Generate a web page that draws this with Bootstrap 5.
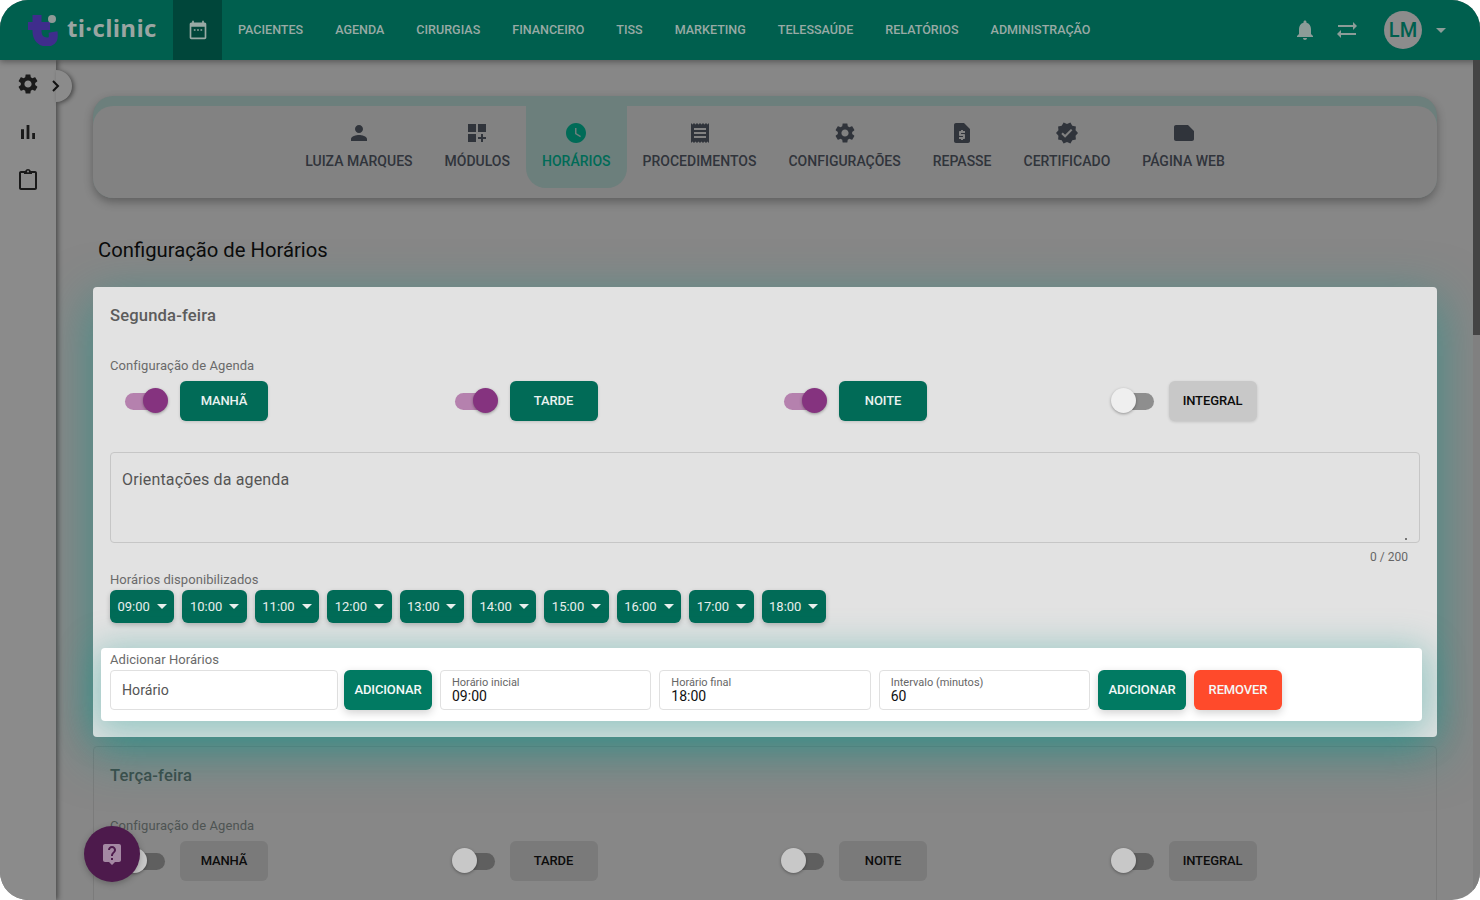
<!DOCTYPE html>
<html lang="pt-BR">
<head>
    <meta charset="UTF-8">
    <title>Configuração de Horários</title>
    <link href="https://cdn.jsdelivr.net/npm/bootstrap@5.3.2/dist/css/bootstrap.min.css" rel="stylesheet">
    <style>
        html, body { height: 100%; overflow: hidden; background: #fff; }
        body { font-family: Roboto, "Liberation Sans", sans-serif; }
        .app-frame { position: relative; width: 1480px; height: 900px; border-radius: 28px; overflow: hidden; background: #878787; }
        .top-bar { position: relative; z-index: 5; height: 60px; flex: none; background: #005f4e; box-shadow: 0 2px 6px rgba(0,0,0,.35); }
        .logo-box { width: 173px; padding-left: 27px; gap: 7px; }
        .logo-text { font-family: "Open Sans", sans-serif; font-weight: 700; font-size: 24px; letter-spacing: .3px; color: #9aa5a2; line-height: 1; margin-top: -4px; }
        .cal-box { width: 49px; height: 60px; background: #00463a; }
        .top-link { font-size: 12.55px; font-weight: 500; color: #98aaa5; margin-left: 32px; text-transform: uppercase; }
        .top-links { padding-left: 16px; }
        .top-links .top-link:first-child { margin-left: 0; }
        .bar-swap { margin-left: 18px; }
        .user-dot { width: 38px; height: 38px; margin-left: 25px; border-radius: 50%; background: #8c8c8c; color: #005f4e; font-size: 20px; font-weight: 500; }
        .user-caret { width: 0; height: 0; margin: 0 34px 0 14px; border-left: 5px solid transparent; border-right: 5px solid transparent; border-top: 5px solid #8c9c98; }
        .side-bar { position: relative; z-index: 3; width: 56px; flex: none; background: #8b8b8b; box-shadow: 2px 0 5px rgba(0,0,0,.45); padding-top: 12px; gap: 24px; }
        .side-open { position: absolute; left: 56px; top: 10px; width: 16px; height: 32px; border-radius: 0 16px 16px 0; background: #8b8b8b; box-shadow: 2px 1px 4px rgba(0,0,0,.45); }
        .side-open svg { margin-left: -8px; }
        .main-scroll { width: 1417px; flex: none; padding: 36px 36px 0 37px; overflow: hidden; }
        .scroll-bar { position: relative; z-index: 6; width: 7px; flex: none; background: #808080; }
        .scroll-thumb { height: 275px; background: #444; }
        .tabs-box { height: 102px; padding-top: 10px; border-radius: 20px; background: #6c7f7c; box-shadow: 0 4px 10px rgba(0,0,0,.3); }
        .tabs-inner { height: 92px; border-radius: 20px; background: #828282; }
        .tab-item { padding: 15px 16px 0; height: 82px; font-size: 14px; font-weight: 500; color: #30343b; border-radius: 0 0 20px 20px; }
        .tab-item svg { display: block; margin: 0 auto 6px; }
        .tab-item.tab-on { background: #6c7f7c; color: #006b57; }
        .page-title { font-size: 20.25px; font-weight: 400; color: #0b0b0b; margin: 40px 0 25px 5px; line-height: 24px; }
        .day-card { position: relative; border-radius: 4px; padding: 17px 17px 0; }
        .day-on { z-index: 2; height: 450px; background: #e2e2e2; box-shadow: 0 14px 50px 2px rgba(0,150,137,.5); }
        .day-off { height: 300px; margin-top: 9px; border: 1px solid #7b7b7b; padding: 17px 16px 0; }
        .day-name { font-size: 16.6px; font-weight: 500; letter-spacing: .15px; color: #5c5c5c; line-height: 24px; margin-bottom: 30px; }
        .day-off .day-name { color: #3f4a48; }
        .field-title { font-size: 13px; letter-spacing: .07px; color: #6a6a6a; line-height: 16px; }
        .day-off .field-title { color: #4e5453; }
        .period-row { width: 1318px; margin: 7px -4px 0; }
        .period-col { width: 329.5px; padding: 0 4px; height: 40px; }
        .switch-box { position: relative; width: 70px; height: 40px; flex: none; }
        .switch-track { position: absolute; top: 12px; left: 15px; width: 42px; height: 17px; border-radius: 9px; background: #b581ae; }
        .switch-dot { position: absolute; top: 7px; left: 33px; width: 25px; height: 25px; border-radius: 50%; background: #85337f; box-shadow: 0 1px 3px rgba(0,0,0,.35); }
        .switch-box.is-off .switch-track { left: 14px; width: 41px; background: #8e8e8e; }
        .switch-box.is-off .switch-dot { left: 12px; background: #efefef; }
        .day-off .switch-box.is-off .switch-track { background: #5f5f5f; }
        .day-off .switch-box.is-off .switch-dot { background: #c8c8c8; }
        .period-btn { width: 88px; height: 40px; padding: 0; border: 0; border-radius: 6px; background: #016b57; color: #eaf2f0; font-size: 13px; letter-spacing: -.12px; font-weight: 500; box-shadow: 0 1px 3px rgba(0,0,0,.15); }
        .period-btn.is-off { background: #c8c8c8; color: #0c0c0c; }
        .day-off .period-btn.is-off { background: #7a7a7a; box-shadow: none; }
        .notes-wrap { position: relative; width: 1310px; margin-top: 31px; }
        .notes-box { width: 100%; height: 91px; display: block; resize: none; border: 1px solid #c6c6c6; border-radius: 4px; background: #e2e2e2; padding: 15px 11px; font-size: 16px; letter-spacing: .15px; }
        .notes-box::placeholder { color: #555; opacity: 1; }
        .notes-grip { position: absolute; right: 13px; bottom: 3px; width: 2px; height: 2px; background: #777; }
        .notes-count { font-size: 12px; color: #666; line-height: 14px; text-align: right; padding: 7px 12px 0 0; }
        .slot-title { margin-top: 8px; }
        .slot-row { gap: 8px; margin-top: 2px; }
        .slot-btn { width: 64.4px; height: 33px; padding: 0; border: 0; border-radius: 6px; background: #016b57; color: #e8efed; font-size: 13px; box-shadow: 0 2px 5px rgba(0,0,0,.22); }
        .slot-btn:hover { background: #016b57; color: #e8efed; }
        .slot-btn.dropdown-toggle::after { margin-left: 7px; vertical-align: 2px; border-top-width: 5px; border-left-width: 5px; border-right-width: 5px; }
        .add-panel { position: relative; width: 1321px; height: 73px; margin: 25px 0 0 -9px; padding: 4px 9px 0; border-radius: 4px; background: #fff; box-shadow: 0 6px 36px 6px rgba(0,150,137,.35); }
        .add-row { gap: 8px; margin-top: 2px; }
        .slot-input { width: 228px; height: 40px; margin-right: -2px; border: 1px solid #e0e0e0; border-radius: 4px; font-size: 14.2px; padding: 0 11px; box-shadow: none; }
        .slot-input::placeholder { color: #555; }
        .time-field { width: 211.33px; height: 40px; padding: 5px 11px; border: 1px solid #e0e0e0; border-radius: 4px; }
        .time-field span { display: block; font-size: 11px; color: #666; line-height: 13px; }
        .time-field input { display: block; width: 100%; border: 0; padding: 0; font-size: 14px; color: #111; line-height: 15px; height: 15px; outline: 0; background: none; }
        .add-btn { width: 88px; height: 40px; padding: 0; border: 0; border-radius: 6px; background: #017a62; color: #f4f8f7; font-size: 13px; letter-spacing: -.12px; font-weight: 500; box-shadow: 0 3px 8px rgba(0,0,0,.18); }
        .add-btn.is-red { background: #ff4a2b; }
        .help-fab { position: absolute; z-index: 8; left: 84px; top: 826px; width: 56px; height: 56px; border-radius: 50%; background: #4d1a4c; box-shadow: 0 2px 6px rgba(0,0,0,.25); }
    </style>
</head>
<body>
<div class="app-frame d-flex flex-column">

    <header class="top-bar d-flex align-items-center">
        <div class="logo-box d-flex align-items-center">
            <svg width="33" height="32" viewBox="0 0 33 32">
                <g fill="none" stroke="#3f2d8c">
                    <path stroke-width="9" d="M10 1V17C10 24 14 28 20 28S27 24 26 18"/>
                    <path stroke-width="8" d="M1 12H23"/>
                </g>
                <circle cx="25" cy="5" r="4" fill="#8f9a97"/>
            </svg>
            <span class="logo-text">ti·clinic</span>
        </div>
        <div class="cal-box d-flex align-items-center justify-content-center">
            <svg width="20" height="20" viewBox="0 0 24 24" fill="#98aaa5"><path d="M20 3h-1V1h-2v2H7V1H5v2H4c-1.1 0-2 .9-2 2v16c0 1.1.9 2 2 2h16c1.1 0 2-.9 2-2V5c0-1.1-.9-2-2-2zm0 18H4V8h16v13z"/><path d="M7 11h2v2H7zM11 11h2v2h-2zM15 11h2v2h-2z"/></svg>
        </div>
        <nav class="top-links d-flex align-items-center">
            <span class="top-link">Pacientes</span>
            <span class="top-link">Agenda</span>
            <span class="top-link">Cirurgias</span>
            <span class="top-link">Financeiro</span>
            <span class="top-link">TISS</span>
            <span class="top-link">Marketing</span>
            <span class="top-link">Telessaúde</span>
            <span class="top-link">Relatórios</span>
            <span class="top-link">Administração</span>
        </nav>
        <div class="ms-auto d-flex align-items-center">
            <svg width="24" height="24" viewBox="0 0 24 24" fill="#8c9c98"><path d="M12 22c1.1 0 2-.9 2-2h-4c0 1.1.89 2 2 2zm6-6v-5c0-3.07-1.64-5.64-4.5-6.32V4c0-.83-.67-1.5-1.5-1.5s-1.5.67-1.5 1.5v.68C7.63 5.36 6 7.92 6 11v5l-2 2v1h16v-1l-2-2z"/></svg>
            <svg class="bar-swap" width="24" height="24" viewBox="0 0 24 24" fill="#8c9c98"><path d="M22 8l-4-4v3H3v2h15v3zM2 16l4 4v-3h15v-2H6v-3z"/></svg>
            <div class="user-dot d-flex align-items-center justify-content-center">LM</div>
            <div class="user-caret"></div>
        </div>
    </header>

    <div class="d-flex flex-grow-1 overflow-hidden">
        <aside class="side-bar d-flex flex-column align-items-center">
            <div class="side-open d-flex align-items-center">
                <svg class="flex-shrink-0" width="16" height="16" viewBox="0 0 16 16" fill="none" stroke="#111" stroke-width="2"><path d="M5 3l5 5-5 5"/></svg>
            </div>
            <svg width="24" height="24" viewBox="0 0 24 24" fill="#1a1a1a"><path d="M19.14 12.94c.04-.3.06-.61.06-.94 0-.32-.02-.64-.07-.94l2.03-1.58c.18-.14.23-.41.12-.61l-1.92-3.32c-.12-.22-.37-.29-.59-.22l-2.39.96c-.5-.38-1.03-.7-1.62-.94l-.36-2.54c-.04-.24-.24-.41-.48-.41h-3.84c-.24 0-.43.17-.47.41l-.36 2.54c-.59.24-1.13.57-1.62.94l-2.39-.96c-.22-.08-.47 0-.59.22L2.74 8.87c-.12.21-.08.47.12.61l2.03 1.58c-.05.3-.09.63-.09.94s.02.64.07.94l-2.03 1.58c-.18.14-.23.41-.12.61l1.92 3.32c.12.22.37.29.59.22l2.39-.96c.5.38 1.03.7 1.62.94l.36 2.54c.05.24.24.41.48.41h3.84c.24 0 .44-.17.47-.41l.36-2.54c.59-.24 1.13-.56 1.62-.94l2.39.96c.22.08.47 0 .59-.22l1.92-3.32c.12-.22.07-.47-.12-.61l-2.01-1.58zM12 15.6c-1.98 0-3.6-1.62-3.6-3.6s1.62-3.6 3.6-3.6 3.6 1.62 3.6 3.6-1.62 3.6-3.6 3.6z"/></svg>
            <svg width="24" height="24" viewBox="0 0 24 24" fill="#1a1a1a"><path d="M5 9.2h3V19H5zM10.6 5h2.8v14h-2.8zm5.6 8H19v6h-2.8z"/></svg>
            <svg width="24" height="24" viewBox="0 0 24 24" fill="#1a1a1a"><path d="M19 3H5c-1.1 0-2 .9-2 2v15c0 1.1.9 2 2 2h14c1.1 0 2-.9 2-2V5c0-1.1-.9-2-2-2zm0 17H5V5h14z"/><path d="M8 6h8V3h-1.2C14.4 1.8 13.3 1 12 1s-2.4.8-2.8 2H8z"/><circle cx="12" cy="3.4" r="1" fill="#8b8b8b"/></svg>
        </aside>

        <main class="main-scroll">
            <div class="tabs-box">
                <div class="tabs-inner d-flex justify-content-center">
                    <div class="tab-item text-center"><svg width="24" height="24" viewBox="0 0 24 24" fill="#30343b"><path d="M12 12c2.21 0 4-1.79 4-4s-1.79-4-4-4-4 1.79-4 4 1.79 4 4 4zm0 2c-2.67 0-8 1.34-8 4v2h16v-2c0-2.66-5.33-4-8-4z"/></svg>LUIZA MARQUES</div>
                    <div class="tab-item text-center"><svg width="24" height="24" viewBox="0 0 24 24" fill="#30343b"><path d="M3 3h8v8H3zm10 0h8v8h-8zM3 13h8v8H3zm15 0h-2v3h-3v2h3v3h2v-3h3v-2h-3z"/></svg>MÓDULOS</div>
                    <div class="tab-item tab-on text-center"><svg width="24" height="24" viewBox="0 0 24 24" fill="#006b57"><path d="M12 2C6.5 2 2 6.5 2 12s4.5 10 10 10 10-4.5 10-10S17.5 2 12 2zm4.2 14.2L11 13V7h1.5v5.2l4.5 2.7-.8 1.3z"/></svg>HORÁRIOS</div>
                    <div class="tab-item text-center"><svg width="24" height="24" viewBox="0 0 24 24" fill="#30343b"><path d="M18 17H6v-2h12v2zm0-4H6v-2h12v2zm0-4H6V7h12v2zM3 22l1.5-1.5L6 22l1.5-1.5L9 22l1.5-1.5L12 22l1.5-1.5L15 22l1.5-1.5L18 22l1.5-1.5L21 22V2l-1.5 1.5L18 2l-1.5 1.5L15 2l-1.5 1.5L12 2l-1.5 1.5L9 2 7.5 3.5 6 2 4.5 3.5 3 2v20z"/></svg>PROCEDIMENTOS</div>
                    <div class="tab-item text-center"><svg width="24" height="24" viewBox="0 0 24 24" fill="#30343b"><path d="M19.14 12.94c.04-.3.06-.61.06-.94 0-.32-.02-.64-.07-.94l2.03-1.58c.18-.14.23-.41.12-.61l-1.92-3.32c-.12-.22-.37-.29-.59-.22l-2.39.96c-.5-.38-1.03-.7-1.62-.94l-.36-2.54c-.04-.24-.24-.41-.48-.41h-3.84c-.24 0-.43.17-.47.41l-.36 2.54c-.59.24-1.13.57-1.62.94l-2.39-.96c-.22-.08-.47 0-.59.22L2.74 8.87c-.12.21-.08.47.12.61l2.03 1.58c-.05.3-.09.63-.09.94s.02.64.07.94l-2.03 1.58c-.18.14-.23.41-.12.61l1.92 3.32c.12.22.37.29.59.22l2.39-.96c.5.38 1.03.7 1.62.94l.36 2.54c.05.24.24.41.48.41h3.84c.24 0 .44-.17.47-.41l.36-2.54c.59-.24 1.13-.56 1.62-.94l2.39.96c.22.08.47 0 .59-.22l1.92-3.32c.12-.22.07-.47-.12-.61l-2.01-1.58zM12 15.6c-1.98 0-3.6-1.62-3.6-3.6s1.62-3.6 3.6-3.6 3.6 1.62 3.6 3.6-1.62 3.6-3.6 3.6z"/></svg>CONFIGURAÇÕES</div>
                    <div class="tab-item text-center"><svg width="24" height="24" viewBox="0 0 24 24" fill="#30343b"><path d="M14 2H6c-1.1 0-1.99.9-1.99 2L4 20c0 1.1.89 2 1.99 2H18c1.1 0 2-.9 2-2V8l-6-6zm1 10h-4v1h3c.55 0 1 .45 1 1v3c0 .55-.45 1-1 1h-1v1h-2v-1H9v-2h4v-1h-3c-.55 0-1-.45-1-1v-3c0-.55.45-1 1-1h1V9h2v1h2v2z"/></svg>REPASSE</div>
                    <div class="tab-item text-center"><svg width="24" height="24" viewBox="0 0 24 24" fill="#30343b"><path d="M23 12l-2.44-2.79.34-3.69-3.61-.82-1.89-3.2L12 2.96 8.6 1.5 6.71 4.69 3.1 5.5l.34 3.7L1 12l2.44 2.79-.34 3.7 3.61.82L8.6 22.5l3.4-1.47 3.4 1.46 1.89-3.19 3.61-.82-.34-3.69L23 12zm-12.91 4.72l-3.8-3.81 1.48-1.48 2.32 2.33 5.85-5.87 1.48 1.48-7.33 7.35z"/></svg>CERTIFICADO</div>
                    <div class="tab-item text-center"><svg width="24" height="24" viewBox="0 0 24 24" fill="#30343b"><path d="M22 10l-6-6H4c-1.1 0-2 .9-2 2v12.01c0 1.1.9 1.99 2 1.99l16-.01c1.1 0 2-.89 2-1.99v-8z"/></svg>PÁGINA WEB</div>
                </div>
            </div>

            <h1 class="page-title">Configuração de Horários</h1>

            <section class="day-card day-on">
                <div class="day-name">Segunda-feira</div>
                <div class="field-title">Configuração de Agenda</div>
                <div class="period-row d-flex">
                    <div class="period-col d-flex"><div class="switch-box"><span class="switch-track"></span><span class="switch-dot"></span></div><button class="period-btn">MANHÃ</button></div>
                    <div class="period-col d-flex"><div class="switch-box"><span class="switch-track"></span><span class="switch-dot"></span></div><button class="period-btn">TARDE</button></div>
                    <div class="period-col d-flex"><div class="switch-box"><span class="switch-track"></span><span class="switch-dot"></span></div><button class="period-btn">NOITE</button></div>
                    <div class="period-col d-flex"><div class="switch-box is-off"><span class="switch-track"></span><span class="switch-dot"></span></div><button class="period-btn is-off">INTEGRAL</button></div>
                </div>
                <div class="notes-wrap">
                    <textarea class="notes-box" placeholder="Orientações da agenda"></textarea>
                    <span class="notes-grip"></span>
                </div>
                <div class="notes-count">0 / 200</div>
                <div class="field-title slot-title">Horários disponibilizados</div>
                <div class="slot-row d-flex">
                    <button class="btn slot-btn dropdown-toggle">09:00</button>
                    <button class="btn slot-btn dropdown-toggle">10:00</button>
                    <button class="btn slot-btn dropdown-toggle">11:00</button>
                    <button class="btn slot-btn dropdown-toggle">12:00</button>
                    <button class="btn slot-btn dropdown-toggle">13:00</button>
                    <button class="btn slot-btn dropdown-toggle">14:00</button>
                    <button class="btn slot-btn dropdown-toggle">15:00</button>
                    <button class="btn slot-btn dropdown-toggle">16:00</button>
                    <button class="btn slot-btn dropdown-toggle">17:00</button>
                    <button class="btn slot-btn dropdown-toggle">18:00</button>
                </div>
                <div class="add-panel">
                    <div class="field-title">Adicionar Horários</div>
                    <div class="add-row d-flex">
                        <input class="form-control slot-input" placeholder="Horário">
                        <button class="add-btn">ADICIONAR</button>
                        <div class="time-field"><span>Horário inicial</span><input value="09:00"></div>
                        <div class="time-field"><span>Horário final</span><input value="18:00"></div>
                        <div class="time-field"><span>Intervalo (minutos)</span><input value="60"></div>
                        <button class="add-btn">ADICIONAR</button>
                        <button class="add-btn is-red">REMOVER</button>
                    </div>
                </div>
            </section>

            <section class="day-card day-off">
                <div class="day-name">Terça-feira</div>
                <div class="field-title">Configuração de Agenda</div>
                <div class="period-row d-flex">
                    <div class="period-col d-flex"><div class="switch-box is-off"><span class="switch-track"></span><span class="switch-dot"></span></div><button class="period-btn is-off">MANHÃ</button></div>
                    <div class="period-col d-flex"><div class="switch-box is-off"><span class="switch-track"></span><span class="switch-dot"></span></div><button class="period-btn is-off">TARDE</button></div>
                    <div class="period-col d-flex"><div class="switch-box is-off"><span class="switch-track"></span><span class="switch-dot"></span></div><button class="period-btn is-off">NOITE</button></div>
                    <div class="period-col d-flex"><div class="switch-box is-off"><span class="switch-track"></span><span class="switch-dot"></span></div><button class="period-btn is-off">INTEGRAL</button></div>
                </div>
            </section>
        </main>

        <div class="scroll-bar"><div class="scroll-thumb"></div></div>
    </div>

    <div class="help-fab d-flex align-items-center justify-content-center">
        <svg width="24" height="24" viewBox="0 0 24 24" fill="#a488a3"><path d="M19 2H5c-1.11 0-2 .9-2 2v14c0 1.1.89 2 2 2h4l3 3 3-3h4c1.1 0 2-.9 2-2V4c0-1.1-.9-2-2-2zm-6 16h-2v-2h2v2zm2.07-7.75l-.9.92C13.45 11.9 13 12.5 13 14h-2v-.5c0-1.1.45-2.1 1.17-2.83l1.24-1.26c.37-.36.59-.86.59-1.41 0-1.1-.9-2-2-2s-2 .9-2 2H8c0-2.21 1.79-4 4-4s4 1.79 4 4c0 .88-.36 1.68-.93 2.25z"/></svg>
    </div>
</div>
<script src="https://cdn.jsdelivr.net/npm/bootstrap@5.3.2/dist/js/bootstrap.bundle.min.js"></script>
</body>
</html>
